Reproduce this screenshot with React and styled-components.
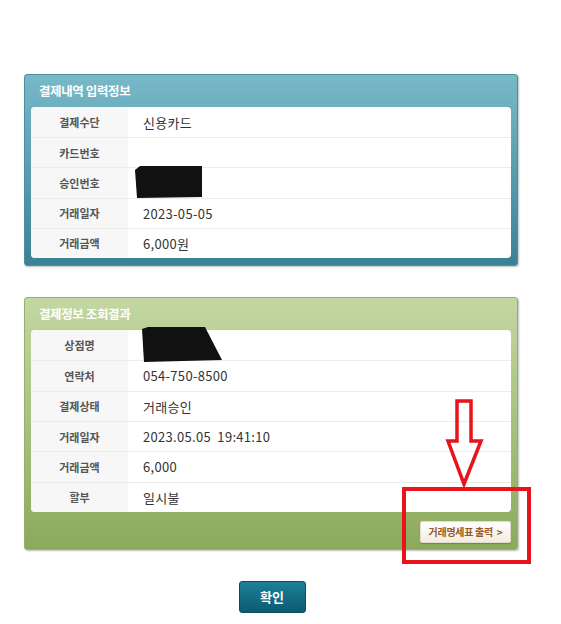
import React from 'react';
import styled, { createGlobalStyle } from 'styled-components';

const GlobalStyle = createGlobalStyle`
  body {
    margin: 0;
    background: #fff;
    font-family: 'Noto Sans CJK KR', 'Noto Sans', sans-serif;
  }
  * {
    box-sizing: border-box;
  }
`;

const Page = styled.div`
  position: relative;
  width: 561px;
  height: 624px;
  padding: 74px 0 0 24px;
`;

const Column = styled.div`
  width: 494px;
  display: flex;
  flex-direction: column;
`;

const Panel = styled.section`
  border-radius: 3px;
  border: 1px solid ${p => p.$edge};
  background: linear-gradient(to bottom, ${p => p.$top}, ${p => p.$bottom});
  padding: 0 6px ${p => p.$padBottom}px 6px;
  box-shadow: 1px 1px 2px rgba(0, 0, 0, 0.25);
  margin-bottom: ${p => p.$gap}px;
`;

const PanelTitle = styled.h2`
  margin: 0;
  height: 32px;
  line-height: 32px;
  padding-left: 8px;
  font-size: 12.5px;
  font-weight: bold;
  color: #fff;
  letter-spacing: -0.4px;
`;

const Table = styled.div`
  background: #fff;
  border-radius: 4px;
  overflow: hidden;
`;

const Row = styled.div`
  display: flex;
  height: ${p => p.$h}px;
  border-top: ${p => (p.$first ? 'none' : '1px solid #ebebeb')};
`;

const Label = styled.div`
  width: 97px;
  flex-shrink: 0;
  background: #f7f7f7;
  display: flex;
  align-items: center;
  justify-content: center;
  font-size: 11px;
  font-weight: bold;
  color: #555;
`;

const Value = styled.div`
  flex: 1;
  display: flex;
  align-items: center;
  padding-left: 15px;
  font-size: 13px;
  color: #333;
  white-space: pre;
  letter-spacing: 0.3px;
`;

const Footer = styled.div`
  display: flex;
  justify-content: flex-end;
  padding: 9px 0 0;
`;

const PrintButton = styled.button`
  height: 22px;
  width: 91px;
  padding: 0;
  border: 1px solid #e3dccb;
  border-radius: 2px;
  background: linear-gradient(to bottom, #ffffff, #f1ede4);
  font-family: inherit;
  font-size: 10px;
  font-weight: bold;
  color: #9a5a22;
  letter-spacing: -0.3px;
  white-space: pre;
  box-shadow: 0 1px 1px rgba(0, 0, 0, 0.2);
`;

const Actions = styled.div`
  display: flex;
  justify-content: center;
  padding-left: 2px;
`;

const ConfirmButton = styled.button`
  width: 67px;
  height: 32px;
  border: 1px solid #0b4f63;
  border-radius: 3px;
  background: linear-gradient(to bottom, #1f7f99, #0c5a72);
  color: #fff;
  font-family: inherit;
  font-size: 13px;
  font-weight: bold;
`;

const Overlay = styled.svg`
  position: absolute;
  left: 0;
  top: 0;
  pointer-events: none;
`;

const input = [
  ['결제수단', '신용카드'],
  ['카드번호', ''],
  ['승인번호', ''],
  ['거래일자', '2023-05-05'],
  ['거래금액', '6,000원'],
];

const result = [
  ['상점명', ''],
  ['연락처', '054-750-8500'],
  ['결제상태', '거래승인'],
  ['거래일자', '2023.05.05  19:41:10'],
  ['거래금액', '6,000'],
  ['할부', '일시불'],
];

const DataTable = ({ rows, h }) => (
  <Table>
    {rows.map(([k, v], i) => (
      <Row key={k} $h={h} $first={i === 0}>
        <Label>{k}</Label>
        <Value>{v}</Value>
      </Row>
    ))}
  </Table>
);

export default function App() {
  return (
    <Page>
      <GlobalStyle />
      <Column>
        <Panel $top="#78b9c8" $bottom="#3b8196" $edge="#4d8e9f" $padBottom={7} $gap={31}>
          <PanelTitle>결제내역 입력정보</PanelTitle>
          <DataTable rows={input} h={30.2} />
        </Panel>
        <Panel $top="#c3d7a2" $bottom="#8caa5c" $edge="#95b06a" $padBottom={6} $gap={31}>
          <PanelTitle>결제정보 조회결과</PanelTitle>
          <DataTable rows={result} h={30.33} />
          <Footer>
            <PrintButton>거래명세표 출력  &gt;</PrintButton>
          </Footer>
        </Panel>
        <Actions>
          <ConfirmButton>확인</ConfirmButton>
        </Actions>
      </Column>
      <Overlay width="561" height="624" viewBox="0 0 561 624">
        <polygon points="135,170 140,166 202,166 202,197 137,198" fill="#111" />
        <polygon points="142,329 148,327 205,327 222,360 144,362" fill="#111" />
        <polygon
          points="457,401 471,401 471,441 481,441 464,484 448,441 457,441"
          fill="none"
          stroke="#e8141c"
          strokeWidth="3.5"
        />
        <rect x="404" y="489" width="125" height="73" fill="none" stroke="#e8141c" strokeWidth="4" />
      </Overlay>
    </Page>
  );
}
